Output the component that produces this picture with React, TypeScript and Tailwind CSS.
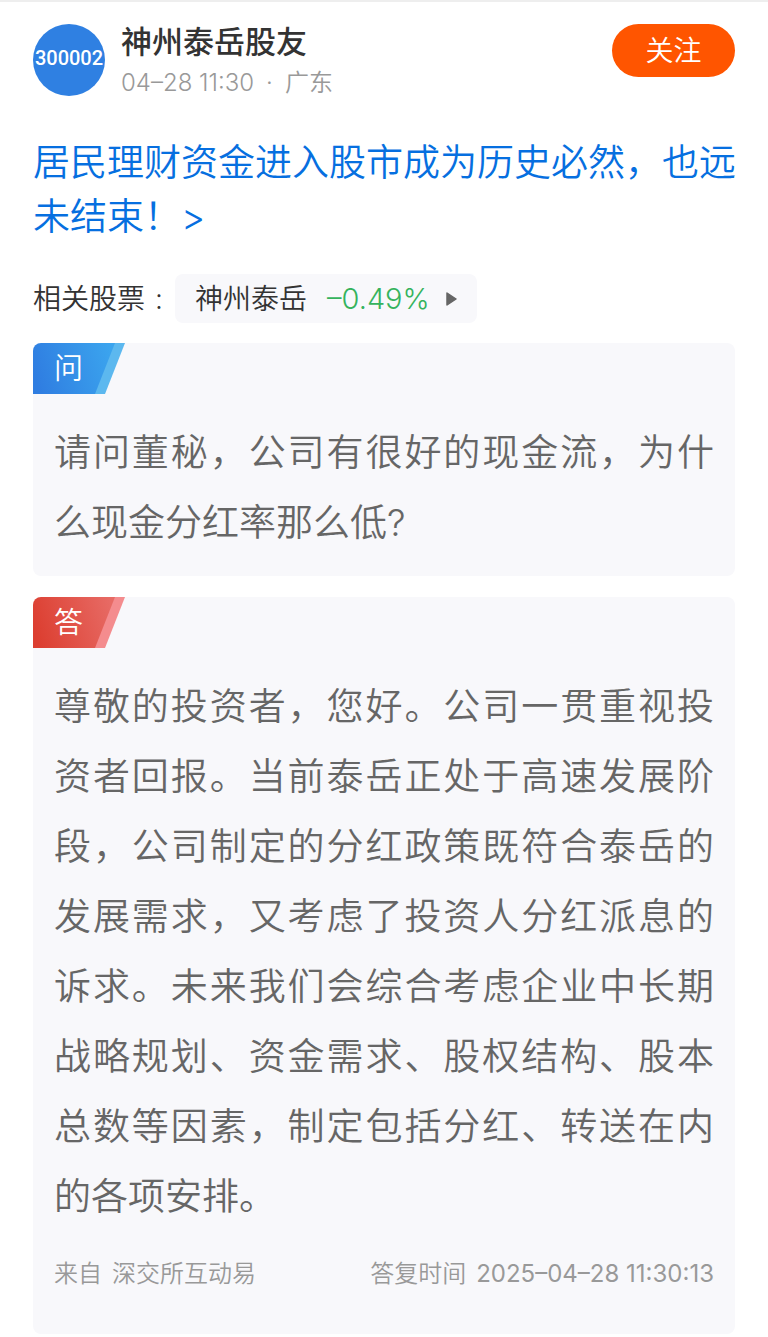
import React from "react";

interface QaCardProps {
    label: string;
    tone: "question" | "answer";
    text: string;
    children?: React.ReactNode;
}

const tones = {
    question: { from: "#2f7de1", to: "#3ba4ee", edge: "#5cb8ef" },
    answer: { from: "#dc3e30", to: "#e76a64", edge: "#f48c8e" },
};

const QaCard: React.FC<QaCardProps> = ({ label, tone, text, children }) => {
    const colors = tones[tone];
    const gradientId = `tab-${tone}`;

    return (
        <section className="overflow-hidden rounded-lg bg-[#f8f8fb]">
            {/* Slanted tab */}
            <div className="relative h-[51px] w-[92px]">
                <svg viewBox="0 0 92 51" className="absolute inset-0 h-full w-full" aria-hidden="true">
                    <defs>
                        <linearGradient id={gradientId} x1="0" y1="0.6" x2="1" y2="0.4">
                            <stop offset="0" stopColor={colors.from} />
                            <stop offset="1" stopColor={colors.to} />
                        </linearGradient>
                    </defs>
                    <path d="M81 0H92L72 51H61Z" fill={colors.edge} />
                    <path d="M0 0H82L62 51H0Z" fill={`url(#${gradientId})`} />
                </svg>
                <h2 className="relative pl-[21px] text-[29px] leading-[51px] text-white">{label}</h2>
            </div>
            <div className="px-[21px] pt-6 pb-[18px]">
                <p className="text-justify text-[37px] leading-[70px] text-[#666]">{text}</p>
                {children}
            </div>
        </section>
    );
};

export default function App() {
    return (
        <main
            lang="zh-CN"
            className="border-t-2 border-[#eee] bg-white px-[33px] pt-[22px] font-['Inter','Noto_Sans_CJK_SC',sans-serif] font-[350] text-[#333]"
        >
            {/* Author */}
            <header className="flex items-start">
                <div className="flex size-[72px] shrink-0 items-center justify-center rounded-full bg-[#2f80e2] pb-1 font-['Roboto',sans-serif] text-[20px] font-medium text-white">
                    300002
                </div>
                <div className="ml-4 grow">
                    <h1 className="text-[31px] leading-[36px] font-medium">神州泰岳股友</h1>
                    <p className="mt-1 flex gap-3 text-[24px] leading-[38px] text-[#999]">
                        <time>04–28 11:30</time>
                        <span>·</span>
                        <span>广东</span>
                    </p>
                </div>
                <button className="h-[53px] w-[123px] shrink-0 rounded-full bg-[#ff5500] text-[28px] text-white">
                    关注
                </button>
            </header>

            <a href="#" className="mt-[34px] -mr-1 block text-[37px] leading-[54px] text-[#066fe0]">
                居民理财资金进入股市成为历史必然，也远未结束！&gt;
            </a>

            {/* Related stock */}
            <div className="mt-[30px] flex items-center text-[28px]">
                <span className="flex w-[142px] gap-[10px] whitespace-nowrap">
                    <span>相关股票</span>
                    <span>:</span>
                </span>
                <a href="#" className="flex h-[49px] items-center rounded-lg bg-[#f8f8fb] px-5">
                    <span>神州泰岳</span>
                    <span className="ml-5 text-[29px] text-[#35b35d]">–0.49%</span>
                    <svg viewBox="0 0 11 16" className="ml-4 h-4 w-[11px]" aria-hidden="true">
                        <path d="M1 2V14L10 8Z" fill="#666" stroke="#666" strokeWidth="1.5" strokeLinejoin="round" />
                    </svg>
                </a>
            </div>

            <div className="mt-5 flex flex-col gap-[21px]">
                <QaCard
                    label="问"
                    tone="question"
                    text="请问董秘，公司有很好的现金流，为什么现金分红率那么低?"
                />
                <QaCard
                    label="答"
                    tone="answer"
                    text="尊敬的投资者，您好。公司一贯重视投资者回报。当前泰岳正处于高速发展阶段，公司制定的分红政策既符合泰岳的发展需求，又考虑了投资人分红派息的诉求。未来我们会综合考虑企业中长期战略规划、资金需求、股权结构、股本总数等因素，制定包括分红、转送在内的各项安排。"
                >
                    <footer className="my-6 flex justify-between text-[24px] leading-[36px] text-[#999]">
                        <span className="flex gap-[10px]">
                            <span>来自</span>
                            <span>深交所互动易</span>
                        </span>
                        <span className="flex gap-[10px]">
                            <span>答复时间</span>
                            <time className="font-normal">2025–04–28 11:30:13</time>
                        </span>
                    </footer>
                </QaCard>
            </div>
        </main>
    );
}
